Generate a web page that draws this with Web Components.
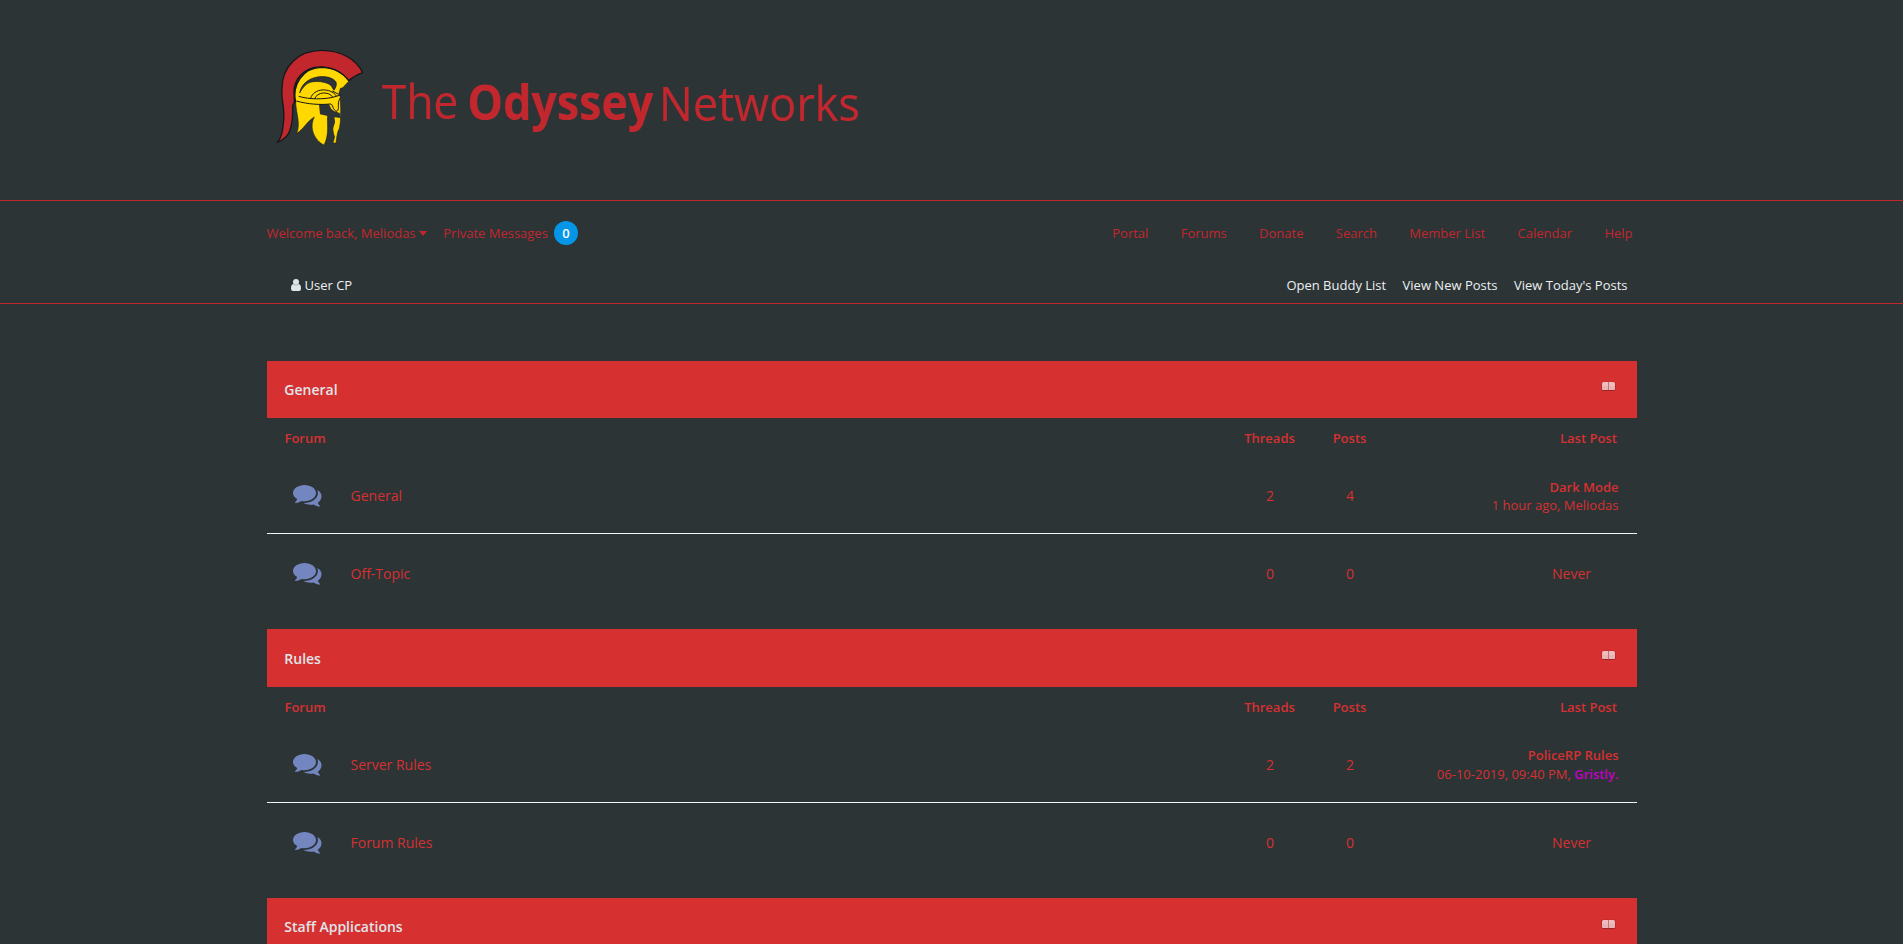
<!DOCTYPE html>
<html lang="en"><head><meta charset="utf-8"><title>The Odyssey Networks</title>
<style>
html,body{margin:0;height:944px;overflow:hidden;background:#2d3436}
body{font:13px/18px "Open Sans",sans-serif;color:#d63031}
</style></head><body>
<forum-app></forum-app>
<script>
const define=(name,html)=>customElements.define(name,class extends HTMLElement{
  connectedCallback(){
    if(this.shadowRoot)return;
    const t=document.createElement('template');
    t.innerHTML=typeof html==='function'?html(this):html;
    this.attachShadow({mode:'open'}).append(t.content.cloneNode(true));
  }
});

define('site-logo',`<style>:host{display:block;height:200px}svg{display:block}text{font-family:"Open Sans",sans-serif;fill:#c1272d}</style>
<svg width="620" height="200" viewBox="267 0 620 200">
<g transform="translate(260 35) scale(.33333)" stroke="#14181a" stroke-linejoin="round">
<path fill="#c1272d" stroke-width="4" d="M52 322C66 308 68 285 71 255C75 220 62 190 66 160C66 95 115 46 185 46C245 46 290 75 308 113C290 120 277 127 265 138C245 110 215 96 180 96C130 97 102 135 102 170L103 203L98 212C99 250 97 290 75 308C65 317 60 320 52 322Z"/>
<path fill="#ffd800" stroke-width="1.500" d="M107 203C94 150 130 97 185 97C225 98 252 118 267 138L248 158L241 160L236 178L240 182L242 222L241 262L238 280C232 290 230 305 228 324H219L224 305C217 290 217 280 223 262L222 250L203 243C200 260 209 300 192 330C165 317 146 280 163 246C145 255 128 285 110 295C122 268 110 240 107 203Z"/>
<path fill="none" stroke-width="4" d="M107 203C94 150 130 97 185 97C225 98 252 118 267 138"/>
<path fill="#2d3436" stroke-width="2" d="M119 174C128 122 200 114 225 137C231 143 231 152 222 166L217 158C213 143 175 135 150 142C135 148 127 160 119 174Z"/>
<path fill="#2d3436" stroke="none" d="M177 208H207L214 222L222 228L239 234L243 249L223 247L225 262L219 280L221 300L206 300L203 243L180 238Z"/>
<path fill="none" stroke-width="3" d="M116 184C150 194 190 193 218 187L242 180M109 198C145 208 180 210 210 207C221 206 216 226 231 229C240 221 230 206 240 190M152 190C160 160 210 155 230 184M164 191C172 170 207 168 219 187M217 168L236 178"/>
</g>
<text x="381.500" y="118.500" font-size="48" font-weight="400" textLength="76.500" lengthAdjust="spacingAndGlyphs">The</text>
<text x="467" y="119.500" font-size="48" font-weight="700" textLength="186" lengthAdjust="spacingAndGlyphs">Odyssey</text>
<text x="658.500" y="120.500" font-size="48" font-weight="400" textLength="201" lengthAdjust="spacingAndGlyphs">Networks</text>
</svg>`);

define('site-nav',`<style>
:host{display:block;box-sizing:border-box;height:104px;border:solid #c1272d;border-width:1px 0;color:#c1272d}
.row{width:1370px;margin:0 auto 0 266.500px;display:flex;justify-content:space-between;align-items:center;box-sizing:border-box}
.main{height:64px;padding-right:4px}.sub{height:38px;padding:1px 9px 0 24.500px;color:#ecf0f1}
.l,.r{display:flex;align-items:center}.main .r{gap:32.350px}.sub .r{gap:16.400px}
.caret{border:4.500px solid transparent;border-top:5px solid;border-bottom:0;margin:0 16.500px 0 3.200px}
.badge{width:24px;height:24px;line-height:24px;border-radius:50%;background:#0696e8;color:#fff;font-weight:600;text-align:center;margin-left:6.200px}
svg{margin-right:3.500px}
</style>
<div class="row main"><div class="l"><span>Welcome back, Meliodas</span><i class="caret"></i><span>Private Messages</span><span class="badge">0</span></div>
<div class="r"><span>Portal</span><span>Forums</span><span>Donate</span><span>Search</span><span>Member List</span><span>Calendar</span><span>Help</span></div></div>
<div class="row sub"><div class="l"><svg width="10" height="12" viewBox="0 0 10 12" fill="#dfe6e9"><circle cx="5" cy="3" r="3"/><path d="M2.300 5Q5 7.500 7.700 5Q10 5.300 10 9.500Q10 12 8 12H2Q0 12 0 9.500Q0 5.300 2.300 5Z"/></svg><span>User CP</span></div>
<div class="r"><span>Open Buddy List</span><span>View New Posts</span><span>View Today's Posts</span></div></div>`);

define('forum-section',e=>`<style>
:host{display:block;height:268.670px}
.head{height:57.600px;background:#d63031;color:#dfe6e9;display:flex;justify-content:space-between;box-sizing:border-box;padding:0 21px 0 17.800px;font:600 14px/58px "Open Sans",sans-serif}
.head span{margin-top:.35px}
.cols{display:grid;grid-template-columns:1fr 80px 80px 247px;height:38px;align-items:center;font-weight:600;padding:2px 0 0 18px;box-sizing:border-box;text-align:center}
.cols :first-child{text-align:left}.cols :last-child{text-align:right;padding-right:19.700px}
svg{margin-top:20.700px}
</style>
<div class="head"><span>${e.getAttribute('name')}</span><svg width="15" height="12" viewBox="0 0 15 12"><rect x=".5" y=".8" width="14" height="9.200" rx="2" fill="#9f2427"/><rect x="1" y="1" width="13" height="8" rx="1.500" fill="#f0bcbd"/><path d="M1 5H14V8L13 9H2L1 8Z" fill="#e9b2b4"/><path d="M7.500 1V9" stroke="#b8797b"/></svg></div>
${e.children.length?'<div class="cols"><span>Forum</span><span>Threads</span><span>Posts</span><span>Last Post</span></div>':''}<slot></slot>`);

define('forum-row',e=>`<style>
:host{display:grid;grid-template-columns:84px 1fr 80px 80px 247px;height:78px;box-sizing:border-box;padding-top:2.700px;align-items:center;font-size:14px;text-align:center;border-bottom:1px solid #f5f5f5}
:host(:last-child){border-color:transparent}
.icon{padding-left:26px;text-align:left;height:22px;margin-top:.5px}svg{display:block}
.title{text-align:left}.n{padding-left:1px}.last{text-align:right;padding-right:18px;font-size:13px;line-height:18.300px}.last.never{font-size:14px;padding-right:45.500px}
</style><span class="icon"><svg width="29" height="23" viewBox="0 0 29 23" fill="#7386c0"><path d="M11.500 0C17.900 0 23 3.600 23 8.100S17.900 16.200 11.500 16.200Q9.900 16.200 8.400 15.900Q5.700 17.900 2.400 18.100Q1.600 17.600 2.300 17.100Q3.900 15.600 4.200 14.100C1.600 12.700 0 10.500 0 8.100C0 3.600 5.100 0 11.500 0Z"/><path d="M24.500 5C27 6.500 28.500 8.500 28.500 11.200C28.500 13.900 27 16.100 24.800 17.600Q25.300 19.500 26.800 20.700Q27.300 21.300 26.500 21.800Q23.300 21.500 20.500 19.500C16.700 20 13 19.500 10.500 18C17.500 18.300 24.900 14 24.900 8.200Q24.900 6.500 24.500 5Z"/></svg></span><span class="title">${e.getAttribute('name')}</span><span class="n">${e.getAttribute('threads')}</span><span class="n">${e.getAttribute('posts')}</span><span class="last ${e.childNodes.length?'':'never'}"><slot>Never</slot></span>`);

define('forum-app',`<style>:host{display:block}main{width:1370px;margin:56.600px auto 0 266.500px}site-logo{margin-left:267px}b{font-weight:600}.m{color:#c400c4}forum-section:last-child{height:46px}</style>
<site-logo></site-logo><site-nav></site-nav><main>
<forum-section name="General"><forum-row name="General" threads="2" posts="4"><b>Dark Mode</b><br>1 hour ago, Meliodas</forum-row><forum-row name="Off-Topic" threads="0" posts="0"></forum-row></forum-section>
<forum-section name="Rules"><forum-row name="Server Rules" threads="2" posts="2"><b>PoliceRP Rules</b><br>06-10-2019, 09:40 PM, <b class="m">Gristly.</b></forum-row><forum-row name="Forum Rules" threads="0" posts="0"></forum-row></forum-section>
<forum-section name="Staff Applications"></forum-section></main>`);
</script></body></html>
